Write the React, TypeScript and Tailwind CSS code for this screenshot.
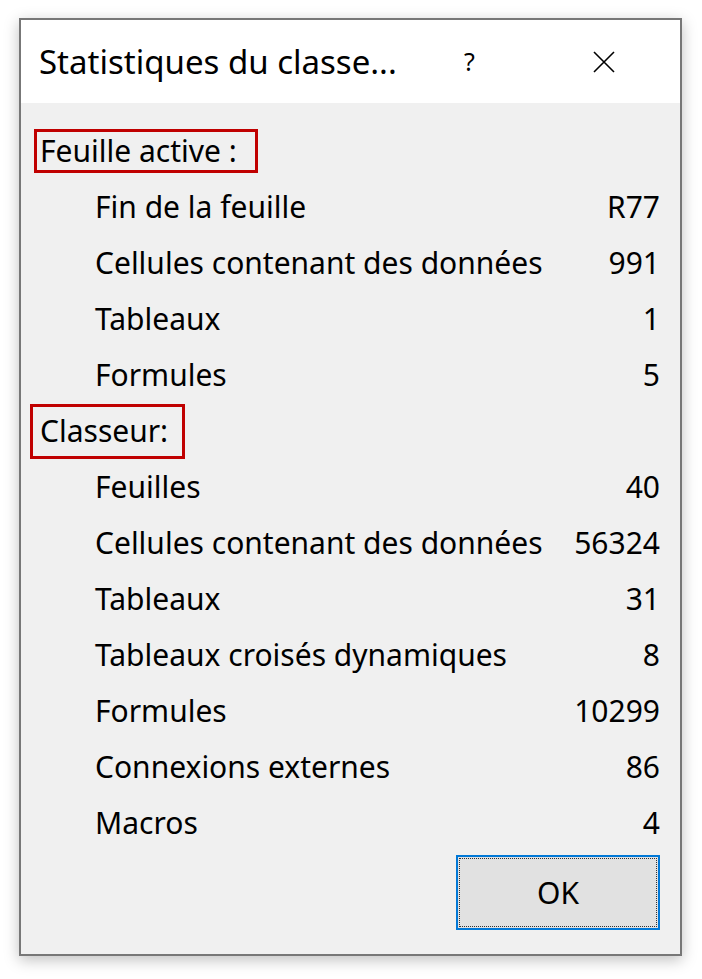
const font = { fontFamily: '"Segoe UI", "Noto Sans", "Open Sans", sans-serif' };

const sheetRows = [
  ["Fin de la feuille", "R77"],
  ["Cellules contenant des données", "991"],
  ["Tableaux", "1"],
  ["Formules", "5"],
];

const bookRows = [
  ["Feuilles", "40"],
  ["Cellules contenant des données", "56324"],
  ["Tableaux", "31"],
  ["Tableaux croisés dynamiques", "8"],
  ["Formules", "10299"],
  ["Connexions externes", "86"],
  ["Macros", "4"],
];

function Row({ label, value }: { label: string; value: string }) {
  return (
    <div className="h-[56px] flex items-center justify-between pl-[74px] pr-[20px]">
      <span>{label}</span>
      <span>{value}</span>
    </div>
  );
}

export default function App() {
  return (
    <div className="w-[702px] h-[979px] bg-white pt-[18px] pl-[19px]" style={font}>
      <div className="w-[663px] h-[938px] border-2 border-[#777777] shadow-[0_4px_14px_rgba(0,0,0,0.25)] flex flex-col text-black text-[30px] leading-none">
        {/* Title bar */}
        <div className="h-[83px] bg-white flex items-center pl-[18px]">
          <span className="w-[425px] text-[33px]">Statistiques du classe...</span>
          <span className="text-[25px] w-[125px]">?</span>
          <svg width="22" height="22" viewBox="0 0 22 22" className="ml-[4px]">
            <path d="M1 1 L21 21 M21 1 L1 21" stroke="#000" strokeWidth="1.6" />
          </svg>
        </div>

        {/* Body */}
        <div className="flex-1 bg-[#f0f0f0] flex flex-col pt-[20px]">
          <div className="h-[56px] flex items-center pl-[13px]">
            <span className="w-[224px] h-[44px] inline-flex items-center border-[3px] border-[#c00000] pl-[3px]">
              Feuille active :
            </span>
          </div>
          {sheetRows.map(([l, v], i) => (
            <Row key={i} label={l} value={v} />
          ))}
          <div className="h-[56px] flex items-center pl-[9px]">
            <span className="w-[155px] h-[55px] inline-flex items-center border-[3px] border-[#c00000] pl-[7px]">
              Classeur:
            </span>
          </div>
          {bookRows.map(([l, v], i) => (
            <Row key={i} label={l} value={v} />
          ))}
          <div className="flex justify-end pr-[20px] mt-[4px]">
            <button className="w-[204px] h-[75px] bg-[#e1e1e1] border-2 border-[#0078d7] p-[1px]">
              <div className="w-full h-full border border-dotted border-[#333] flex items-center justify-center">
                OK
              </div>
            </button>
          </div>
        </div>
      </div>
    </div>
  );
}
